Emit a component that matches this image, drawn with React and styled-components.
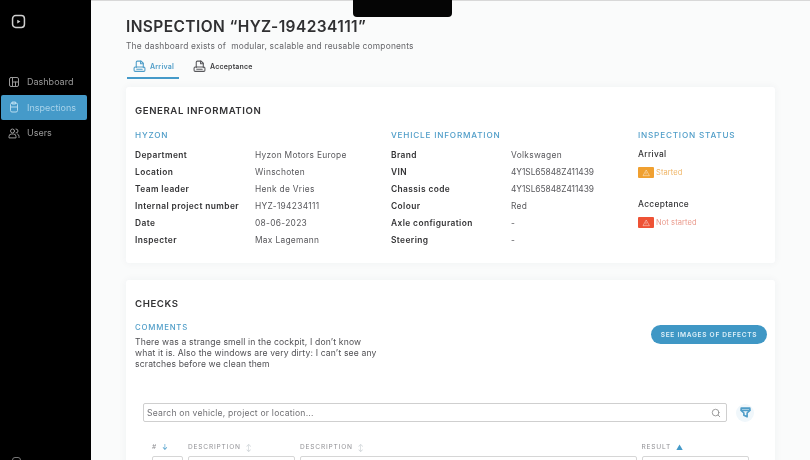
import {Fragment} from "react";
import styled, {createGlobalStyle} from "styled-components";

const Global = createGlobalStyle`
  html, body {
    margin: 0;
    padding: 0;
    background: #fff;
  }
  * {
    box-sizing: border-box;
  }
`

const Page = styled.div`
  position: relative;
  display: flex;
  width: 810px;
  height: 460px;
  overflow: hidden;
  font-family: Inter, "Noto Sans", sans-serif;
  color: #2c2c2e;
  background: #fafbfb;
  filter: blur(0.55px);
`

const Notch = styled.div`
  position: absolute;
  top: 0;
  left: 353px;
  width: 99px;
  height: 17px;
  background: #050505;
  border-radius: 0 0 4px 4px;
`

const Sidebar = styled.aside`
  flex: 0 0 91px;
  display: flex;
  flex-direction: column;
  height: 100%;
  padding: 14px 4px 0 1px;
  background: #000;
`

const Logo = styled.svg`
  display: block;
  width: 15px;
  height: 15px;
  margin: 0 0 40px 10px;
`

const NavItem = styled.div`
  display: flex;
  align-items: center;
  gap: 7px;
  height: 25.5px;
  padding-left: 7px;
  border-radius: 2px;
  font-size: 9px;
  color: ${p => (p.$active ? "#a9d3ea" : "#9a9a9a")};
  background: ${p => (p.$active ? "#459ac9" : "transparent")};
`

const BottomIcon = styled.div`
  margin: auto 0 -3px 11px;
  width: 9px;
  height: 6px;
  border: 1px solid #777;
  border-radius: 4px;
`

const Main = styled.main`
  flex: 1;
  display: flex;
  flex-direction: column;
  min-width: 0;
  padding: 18px 35px 0 35px;
  border-top: 1px solid #d8d8d8;
`

const Title = styled.h1`
  margin: 0;
  font-size: 15.5px;
  line-height: 16px;
  font-weight: 600;
  letter-spacing: 0.4px;
  white-space: nowrap;
  color: #303032;
`

const Subtitle = styled.p`
  margin: 6px 0 0;
  font-size: 8.4px;
  line-height: 10px;
  letter-spacing: 0.2px;
  white-space: pre;
  color: #66666a;
`

const Tabs = styled.div`
  display: flex;
  gap: 8px;
  margin: 9px 0 0 1px;
  height: 29px;
`

const Tab = styled.div`
  display: flex;
  align-items: center;
  gap: 4px;
  width: ${p => (p.$active ? "52px" : "auto")};
  padding: 0 0 4px 6px;
  font-size: 7px;
  font-weight: 600;
  letter-spacing: 0.2px;
  color: ${p => (p.$active ? "#4f9dc8" : "#3c3c3e")};
  border-bottom: 2px solid ${p => (p.$active ? "#459ac9" : "transparent")};
`

const Card = styled.section`
  flex-shrink: 0;
  margin-top: ${p => p.$top}px;
  padding: 18px 8px 0 9px;
  height: ${p => p.$height}px;
  background: #fff;
  border-radius: 3px;
  box-shadow: 0 0 8px rgba(40, 60, 80, 0.05);
`

const CardTitle = styled.h2`
  margin: 0;
  font-size: 9.6px;
  line-height: 12px;
  font-weight: 600;
  letter-spacing: 0.6px;
  color: #333335;
`

const InfoGrid = styled.div`
  display: grid;
  grid-template-columns: 256px 247px 1fr;
  margin-top: 13px;
`

const Heading = styled.h3`
  margin: 0 0 5px;
  font-size: 8.2px;
  line-height: 11px;
  font-weight: 500;
  letter-spacing: 0.8px;
  white-space: nowrap;
  color: #4f9dc8;
`

const Rows = styled.div`
  display: grid;
  grid-template-columns: 120px 1fr;
  grid-auto-rows: 17.1px;
  align-items: center;
`

const Label = styled.span`
  font-size: 8.4px;
  font-weight: 600;
  letter-spacing: 0.4px;
  color: #333335;
  white-space: nowrap;
`

const Value = styled.span`
  font-size: 8.4px;
  letter-spacing: ${p => (p.$tight ? "-0.05px" : "0.3px")};
  color: #58585c;
  white-space: nowrap;
`

const StatusLabel = styled.div`
  font-size: 8.4px;
  line-height: 17px;
  font-weight: 500;
  letter-spacing: 0.3px;
  color: #333335;
  margin-top: ${p => p.$top}px;
`

const Status = styled.div`
  display: flex;
  align-items: center;
  gap: 2px;
  margin-top: 4px;
  font-size: 7.5px;
  letter-spacing: 0.1px;
  color: ${p => p.$text};
`

const StatusBox = styled.span`
  display: flex;
  align-items: center;
  justify-content: center;
  width: 16px;
  height: 11px;
  border-radius: 1px;
  background: ${p => p.$color};
`

const CommentRow = styled.div`
  display: flex;
  justify-content: space-between;
  align-items: flex-start;
  margin-top: 12px;
`

const CommentHeading = styled(Heading)`
  margin-bottom: 4px;
  font-size: 7.8px;
`

const CommentText = styled.p`
  margin: 0;
  width: 245px;
  font-size: 8.6px;
  line-height: 10.8px;
  letter-spacing: 0.15px;
  color: #505054;
`

const Button = styled.button`
  height: 19px;
  width: 116px;
  margin-top: 3px;
  padding: 0;
  border: 0;
  border-radius: 10px;
  background: #3f97c5;
  color: #dff0f8;
  font-family: inherit;
  font-size: 6.6px;
  font-weight: 600;
  letter-spacing: 0.7px;
`

const SearchRow = styled.div`
  display: flex;
  align-items: center;
  gap: 9px;
  margin: 34px 0 0 8px;
`

const SearchBox = styled.div`
  display: flex;
  align-items: center;
  justify-content: space-between;
  width: 584px;
  height: 19px;
  padding: 0 5px 0 3px;
  border: 1px solid #cfcfcf;
  border-radius: 2px;
  font-size: 8.6px;
  letter-spacing: 0.2px;
  color: #707074;
`

const FilterButton = styled.div`
  display: flex;
  align-items: center;
  justify-content: center;
  width: 18px;
  height: 18px;
  border-radius: 50%;
  background: #f0f7fb;
`

const Table = styled.div`
  display: grid;
  grid-template-columns: 31px 107px 336.5px 107px;
  column-gap: 5px;
  margin: 19px 0 0 17px;
`

const HeadCell = styled.div`
  display: flex;
  align-items: center;
  gap: 5px;
  height: 12px;
  margin-bottom: 3px;
  font-size: 6.6px;
  letter-spacing: 0.8px;
  color: #909094;
`

const Cell = styled.div`
  height: 20px;
  border: 1px solid #d6d6d6;
  border-radius: 2px;
`

const Sort = styled.span`
  font-size: 7px;
  line-height: 7px;
  color: ${p => (p.$active ? "#459ac9" : "#c9cfd3")};
`

const Glyph = ({children, size = 12, color = "#9a9a9a", weight = 2}) => (
  <svg width={size} height={size} viewBox="0 0 24 24" fill="none" stroke={color} strokeWidth={weight}
       strokeLinecap="round" strokeLinejoin="round" style={{flexShrink: 0}}>
    {children}
  </svg>
);

const general = [
  ["Department", "Hyzon Motors Europe"],
  ["Location", "Winschoten"],
  ["Team leader", "Henk de Vries"],
  ["Internal project number", "HYZ-194234111"],
  ["Date", "08-06-2023"],
  ["Inspecter", "Max Lagemann"],
];

const vehicle = [
  ["Brand", "Volkswagen"],
  ["VIN", "4Y1SL65848Z411439"],
  ["Chassis code", "4Y1SL65848Z411439"],
  ["Colour", "Red"],
  ["Axle configuration", "-"],
  ["Steering", "-"],
];

const DocIcon = ({color}) => (
  <Glyph size={13} color={color}>
    <path d="M6 14V4a2 2 0 0 1 2-2h7l4 4v8"/>
    <path d="M14 2v5h5"/>
    <rect x="2" y="13" width="20" height="8" rx="2"/>
    <path d="M7 17h10"/>
  </Glyph>
);

const AlertIcon = () => (
  <Glyph size={8} color="rgba(255,255,255,0.65)">
    <path d="M12 4 3 20h18z"/>
    <path d="M12 10v5"/>
  </Glyph>
);

export default function App() {
  return (
    <Page>
      <Global/>
      <Sidebar>
        <Logo viewBox="0 0 24 24" fill="none">
          <rect x="2.5" y="2.5" width="19" height="19" rx="5" stroke="#cfcfcf" strokeWidth="2.4"/>
          <path d="M10 9l5 3-5 3z" fill="#cfcfcf"/>
        </Logo>
        <NavItem>
          <Glyph>
            <rect x="3" y="3" width="18" height="18" rx="3"/>
            <path d="M9 3v18M15 12v9M9 12h12"/>
          </Glyph>
          Dashboard
        </NavItem>
        <NavItem $active>
          <Glyph color="#b7dcf0">
            <rect x="5" y="4" width="14" height="18" rx="3"/>
            <path d="M9 2h6v4H9zM5 12h14"/>
          </Glyph>
          Inspections
        </NavItem>
        <NavItem>
          <Glyph>
            <circle cx="9" cy="8" r="4"/>
            <path d="M2 21v-2a5 5 0 0 1 5-5h4a5 5 0 0 1 5 5v2zM16 4a4 4 0 0 1 0 8M19 14a5 5 0 0 1 3 5v2"/>
          </Glyph>
          Users
        </NavItem>
        <BottomIcon/>
      </Sidebar>

      <Main>
        <Title>INSPECTION “HYZ-194234111”</Title>
        <Subtitle>The dashboard exists of  modular, scalable and reusable components</Subtitle>
        <Tabs>
          <Tab $active><DocIcon color="#4f9dc8"/>Arrival</Tab>
          <Tab><DocIcon color="#58585c"/>Acceptance</Tab>
        </Tabs>

        <Card $top={8} $height={176}>
          <CardTitle>GENERAL INFORMATION</CardTitle>
          <InfoGrid>
            <div>
              <Heading>HYZON</Heading>
              <Rows>
                {general.map(([k, v]) => (
                  <Fragment key={k}><Label>{k}</Label><Value>{v}</Value></Fragment>
                ))}
              </Rows>
            </div>
            <div>
              <Heading>VEHICLE INFORMATION</Heading>
              <Rows>
                {vehicle.map(([k, v]) => (
                  <Fragment key={k}><Label>{k}</Label><Value $tight={v.startsWith("4Y1")}>{v}</Value></Fragment>
                ))}
              </Rows>
            </div>
            <div>
              <Heading>INSPECTION STATUS</Heading>
              <StatusLabel $top={2}>Arrival</StatusLabel>
              <Status $text="#efb566"><StatusBox $color="#f0a030"><AlertIcon/></StatusBox>Started</Status>
              <StatusLabel $top={18}>Acceptance</StatusLabel>
              <Status $text="#ea9a8c"><StatusBox $color="#ee5235"><AlertIcon/></StatusBox>Not started</Status>
            </div>
          </InfoGrid>
        </Card>

        <Card $top={17} $height={200}>
          <CardTitle>CHECKS</CardTitle>
          <CommentRow>
            <div>
              <CommentHeading>COMMENTS</CommentHeading>
              <CommentText>
                There was a strange smell in the cockpit, I don’t know what it is. Also the windows are very dirty: I can’t see any scratches before we clean them
              </CommentText>
            </div>
            <Button>SEE IMAGES OF DEFECTS</Button>
          </CommentRow>
          <SearchRow>
            <SearchBox>
              Search on vehicle, project or location...
              <Glyph size={10} color="#8a8a8a">
                <circle cx="11" cy="11" r="8"/>
                <path d="M21 21l-4-4"/>
              </Glyph>
            </SearchBox>
            <FilterButton>
              <Glyph size={13} color="#4f9dc8" weight={3}>
                <path d="M4 4h16v4l-5 5v7l-6-3v-4L4 8z"/>
                <path d="M4 8h16"/>
              </Glyph>
            </FilterButton>
          </SearchRow>
          <Table>
            <HeadCell># <Sort $active>↓</Sort></HeadCell>
            <HeadCell>DESCRIPTION <Sort>↕</Sort></HeadCell>
            <HeadCell>DESCRIPTION <Sort>↕</Sort></HeadCell>
            <HeadCell>RESULT <Sort $active>▲</Sort></HeadCell>
            <Cell/><Cell/><Cell/><Cell/>
          </Table>
        </Card>
      </Main>
      <Notch/>
    </Page>
  );
}
